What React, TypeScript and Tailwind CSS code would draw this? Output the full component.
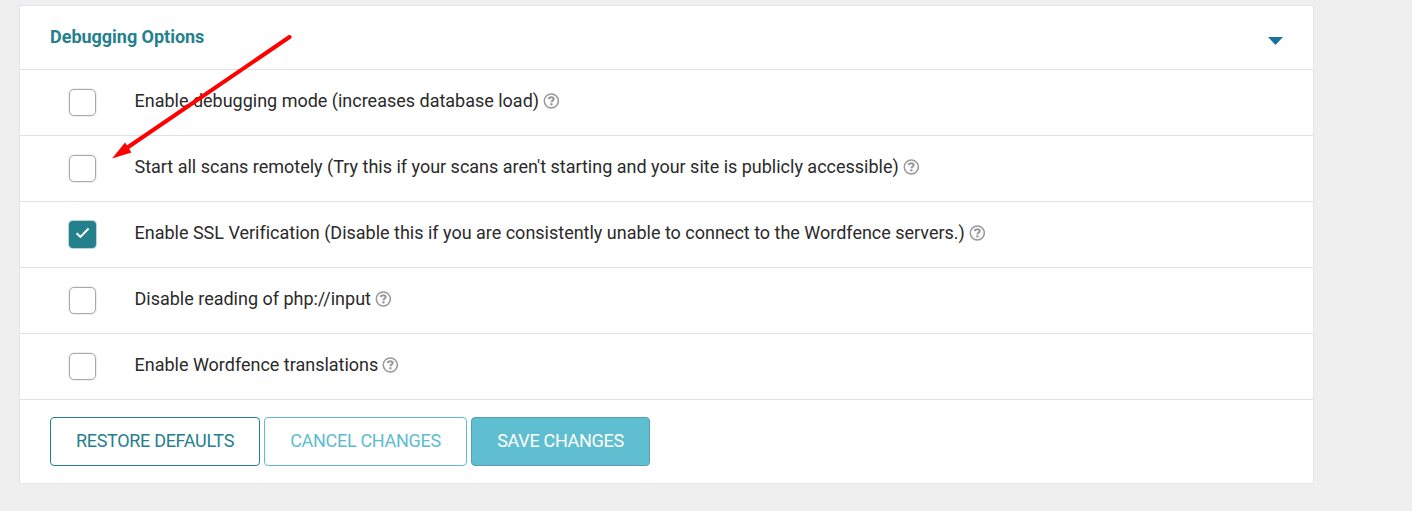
import React from "react";

type Option = { label: string; checked?: boolean };

const options: Option[] = [
  { label: "Enable debugging mode (increases database load)" },
  { label: "Start all scans remotely (Try this if your scans aren't starting and your site is publicly accessible)" },
  { label: "Enable SSL Verification (Disable this if you are consistently unable to connect to the Wordfence servers.)", checked: true },
  { label: "Disable reading of php://input" },
  { label: "Enable Wordfence translations" },
];

function HelpIcon() {
  return (
    <svg className="ml-1 size-4 shrink-0" viewBox="0 0 16 16" fill="none" stroke="#999999">
      <circle cx="8.3" cy="8" r="7" strokeWidth="1.5" />
      <path d="M5.6 6C6.1 4.7 7.1 4.2 8.3 4.2c1.4 0 2.4.8 2.4 1.9 0 1.6-2.3 1.5-2.3 3.1" strokeWidth="2.1" />
      <path d="M8.4 10.2v2.2" strokeWidth="2.2" />
    </svg>
  );
}

function Checkbox({ checked }: { checked?: boolean }) {
  return (
    <span
      role="checkbox"
      aria-checked={!!checked}
      className={
        checked
          ? "flex size-[27px] items-center justify-center rounded-[4px] bg-[#25808e] shadow-[0_0_0_1px_#25808e55]"
          : "flex size-[27px] rounded-[5px] border border-[#a9a9a9] bg-white shadow-[0_0_0_1px_#a9a9a930]"
      }
    >
      {checked && (
        <svg className="h-4 w-4 shrink-0" viewBox="0 0 16 16" fill="none" stroke="white" strokeWidth="2">
          <path d="M1.6 6.2l3.8 3.7 8.2-8.4" />
        </svg>
      )}
    </span>
  );
}

export default function App() {
  return (
    <div className="relative h-[511px] w-[1412px] overflow-hidden bg-[#efefef] pt-[5px] pl-[19px] font-[Roboto,sans-serif] text-[18px] text-[#2a2a2a]">
      <section className="h-[479px] w-[1295px] border border-[#e2e6ea] bg-white">
        <header className="flex h-[63px] items-center justify-between pr-[30px] pl-[30px]">
          <h2 className="pb-0.5 text-[18px] leading-6 font-bold text-[#25808e] -tracking-[0.02px]">Debugging Options</h2>
          <svg className="mt-[7px] h-2 w-[15px]" viewBox="0 0 15 8" fill="#1b719e">
            <path d="M0 0h15L7.5 8z" />
          </svg>
        </header>
        <ul>
          {options.map((o) => (
            <li key={o.label} className="flex h-[66px] items-center border-t border-[#dfe1e3] pl-[49px]">
              <Checkbox checked={o.checked} />
              <span className="ml-[38.5px] flex items-center pb-1 leading-6 -tracking-[0.008px] whitespace-nowrap">
                {o.label}
                <HelpIcon />
              </span>
            </li>
          ))}
        </ul>
        <footer className="flex gap-1 border-t border-[#dfe1e3] pt-[17px] pl-[30px] -tracking-[0.31px]">
          <button className="h-[49px] w-[210px] rounded-[4px] border border-[#25808e] pb-0.5 text-[#25808e]">RESTORE DEFAULTS</button>
          <button className="h-[49px] w-[203px] rounded-[4px] border border-[#5dbdce] pb-0.5 text-[#5dbdce]">CANCEL CHANGES</button>
          <button className="h-[49px] w-[179px] rounded-[4px] border border-[#559fb4] bg-[#5fbfd0] pb-0.5 text-white">SAVE CHANGES</button>
        </footer>
      </section>
      <svg className="pointer-events-none absolute top-0 left-0 h-[180px] w-[320px]" viewBox="0 0 320 180">
        <path d="M289.5 37L126 148.5" stroke="#ff0000" strokeWidth="4" strokeLinecap="round" />
        <path d="M112 158.5L125 142.5L131.5 152.5Z" fill="#ff0000" />
      </svg>
    </div>
  );
}
